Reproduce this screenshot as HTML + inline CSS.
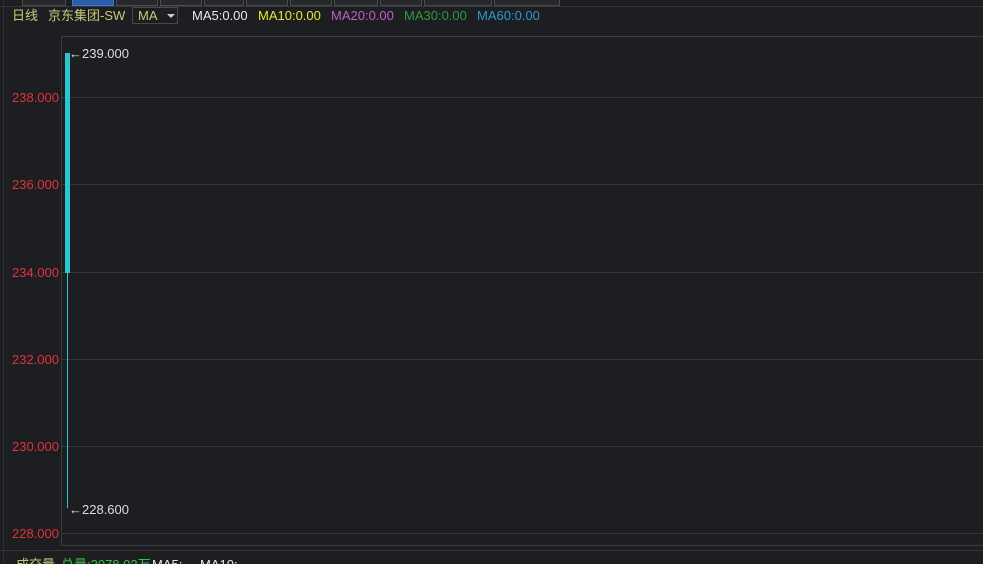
<!DOCTYPE html><html style="width:983px;height:564px;overflow:hidden"><head><meta charset="utf-8"><style>
body{margin:0;width:983px;height:564px;background:#1d1e21;overflow:hidden;position:relative;font-family:"Liberation Sans","Noto Sans CJK SC",sans-serif;font-size:13px;line-height:16px}
.a{position:absolute;white-space:nowrap}
.btn{position:absolute;top:-6px;height:10px;border:1px solid #4a4c50;background:#26282c}
.g{position:absolute;left:62px;right:0;height:1px;background:#34363a}
.y{position:absolute;left:12px;color:#e0333a;font-size:13px}
</style></head><body>
<div class="a" style="left:3px;top:0;width:1px;height:564px;background:#2e3034"></div>
<div class="btn" style="left:22px;width:42px"></div>
<div class="btn" style="left:72px;width:40px;background:#2a5fa8;border-color:#3a7ad0"></div>
<div class="btn" style="left:116px;width:40px"></div>
<div class="btn" style="left:160px;width:40px"></div>
<div class="btn" style="left:204px;width:38px"></div>
<div class="btn" style="left:246px;width:40px"></div>
<div class="btn" style="left:290px;width:40px"></div>
<div class="btn" style="left:334px;width:42px"></div>
<div class="btn" style="left:380px;width:40px"></div>
<div class="btn" style="left:424px;width:66px"></div>
<div class="btn" style="left:494px;width:64px"></div>
<div class="a" style="left:0;top:6px;width:983px;height:1px;background:#34363a"></div>
<div class="a" style="left:12px;top:8px;color:#c9c97a">日线</div>
<div class="a" style="left:48px;top:8px;color:#c9c97a">京东集团-SW</div>
<div class="a" style="left:132px;top:7px;width:46px;height:17px;border:1px solid #46484c;color:#c9c97a;box-sizing:border-box;padding-left:5px;line-height:15px">MA<span style="position:absolute;left:34px;top:6px;border:4px solid transparent;border-top:4px solid #ccc;border-bottom:0"></span></div>
<div class="a" style="left:192px;top:8px;color:#e8e8e8">MA5:0.00</div>
<div class="a" style="left:258px;top:8px;color:#e8e830">MA10:0.00</div>
<div class="a" style="left:331px;top:8px;color:#c060c8">MA20:0.00</div>
<div class="a" style="left:404px;top:8px;color:#2e9a3a">MA30:0.00</div>
<div class="a" style="left:477px;top:8px;color:#2a9ad0">MA60:0.00</div>
<div class="a" style="left:61px;top:36px;width:922px;height:510px;border-left:1px solid #3a3c40;border-top:1px solid #3a3c40;border-bottom:1px solid #3a3c40;box-sizing:border-box"></div>
<div class="g" style="top:97px"></div><div class="g" style="top:184px"></div><div class="g" style="top:272px"></div><div class="g" style="top:359px"></div><div class="g" style="top:446px"></div><div class="g" style="top:533px"></div>
<div class="y" style="top:90px">238.000</div><div class="y" style="top:177px">236.000</div><div class="y" style="top:265px">234.000</div><div class="y" style="top:352px">232.000</div><div class="y" style="top:439px">230.000</div><div class="y" style="top:526px">228.000</div>
<div class="a" style="left:65px;top:53px;width:5px;height:220px;background:#2ec4cc"></div>
<div class="a" style="left:67px;top:272px;width:1px;height:236px;background:#2ec4cc"></div>
<div class="a" style="left:69px;top:46px;color:#ddd">←239.000</div>
<div class="a" style="left:69px;top:502px;color:#ddd">←228.600</div>
<div class="a" style="left:0;top:550px;width:983px;height:1px;background:#34363a"></div>
<div class="a" style="left:16px;top:557px;color:#c9c97a">成交量</div>
<div class="a" style="left:61px;top:557px;color:#3cc040">总量:2078.02万</div>
<div class="a" style="left:152px;top:557px;color:#e8e8e8">MA5:</div>
<div class="a" style="left:200px;top:557px;color:#e8e8e8">MA10:</div>
</body></html>
